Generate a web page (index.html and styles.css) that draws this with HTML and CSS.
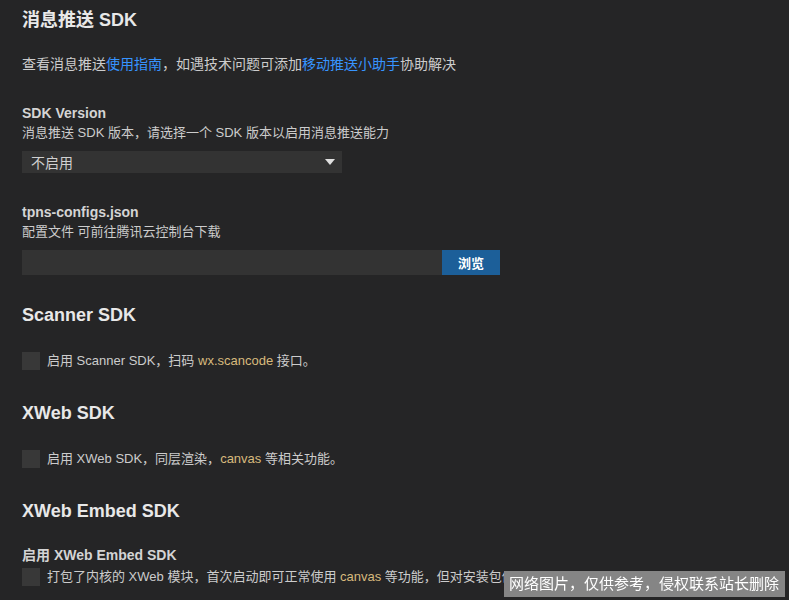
FILE: index.html
```html
<!DOCTYPE html>
<html lang="zh-CN">

<head>
    <meta charset="UTF-8">
    <meta name="viewport" content="width=device-width, initial-scale=1.0">
    <title>SDK 设置</title>
    <link rel="stylesheet" href="styles.css">
</head>

<body>
    <div class="page">
        <h1 class="title">消息推送 SDK</h1>
        <p class="intro">查看消息推送<a href="#">使用指南</a>，如遇技术问题可添加<a href="#">移动推送小助手</a>协助解决</p>

        <div class="field">
            <div class="field-label">SDK Version</div>
            <div class="field-desc">消息推送 SDK 版本，请选择一个 SDK 版本以启用消息推送能力</div>
            <div class="select">
                <span>不启用</span>
                <svg width="10" height="6" viewBox="0 0 10 6"><path d="M0 0h10L5 6z" fill="#e0e0e0"/></svg>
            </div>
        </div>

        <div class="field">
            <div class="field-label">tpns-configs.json</div>
            <div class="field-desc">配置文件 可前往腾讯云控制台下载</div>
            <div class="file-row">
                <div class="file-input"></div>
                <button class="button">浏览</button>
            </div>
        </div>

        <h2 class="title section after-field">Scanner SDK</h2>
        <label class="check-row">
            <span class="checkbox"></span>
            <span>启用 Scanner SDK，扫码 <code>wx.scancode</code> 接口。</span>
        </label>

        <h2 class="title section">XWeb SDK</h2>
        <label class="check-row">
            <span class="checkbox"></span>
            <span>启用 XWeb SDK，同层渲染，<code>canvas</code> 等相关功能。</span>
        </label>

        <h2 class="title section">XWeb Embed SDK</h2>
        <div class="field-label embed-label">启用 XWeb Embed SDK</div>
        <label class="check-row embed-row">
            <span class="checkbox"></span>
            <span class="clipped">打包了内核的 XWeb 模块，首次启动即可正常使用 <code>canvas</code> 等功能，但对安装包体积有一定影响。</span>
        </label>
    </div>

    <div class="watermark">网络图片，仅供参考，侵权联系站长删除</div>
</body>

</html>
```

FILE: styles.css
```css
body {
    font-family: "Liberation Sans", "Noto Sans CJK SC", sans-serif;
    margin: 0;
    padding: 0;
    background-color: #252526;
    color: #cccccc;
    height: 600px;
    overflow: hidden;
}

.page {
    padding: 8px 22px 0;
}

.title {
    font-size: 18px;
    line-height: 24px;
    font-weight: bold;
    color: #e8e8e8;
    margin: 0;
}

.section {
    margin-top: 30px;
}

.section.after-field {
    margin-top: 28px;
}

.intro {
    font-size: 14px;
    line-height: 20px;
    margin: 22px 0 0;
}

.intro a {
    color: #3794ff;
    text-decoration: none;
}

.field {
    margin-top: 29px;
}

.field-label {
    font-size: 14px;
    line-height: 20px;
    font-weight: bold;
    color: #d4d4d4;
}

.field-desc {
    font-size: 13px;
    line-height: 20px;
    margin-bottom: 8px;
}

.select {
    width: 320px;
    height: 22px;
    box-sizing: border-box;
    background-color: #333333;
    display: flex;
    align-items: center;
    justify-content: space-between;
    padding: 0 7px 0 9px;
    font-size: 14px;
    color: #d0d0d0;
}

.file-row {
    display: flex;
    height: 25px;
    width: 478px;
}

.file-input {
    flex: 1;
    background-color: #333333;
}

.button {
    width: 58px;
    background-color: #1c5f99;
    color: white;
    border: none;
    font-family: inherit;
    font-size: 13px;
    font-weight: bold;
    padding: 0;
    cursor: pointer;
}

.check-row {
    display: flex;
    align-items: center;
    gap: 7px;
    margin-top: 24px;
    font-size: 13px;
    line-height: 20px;
    white-space: nowrap;
}

.checkbox {
    width: 18px;
    height: 18px;
    flex-shrink: 0;
    background-color: #383838;
}

code {
    font-family: inherit;
    color: #d7ba7d;
}

.embed-label {
    margin-top: 22px;
}

.embed-row {
    margin-top: 2px;
}

/* the rest of this line sits under the watermark */
.clipped {
    width: 457px;
    overflow: hidden;
}

.watermark {
    position: fixed;
    right: 4px;
    bottom: 3px;
    width: 281px;
    height: 26px;
    box-sizing: border-box;
    background-color: rgba(150, 150, 150, 0.85);
    color: #ffffff;
    font-size: 15px;
    line-height: 26px;
    padding-left: 5px;
    white-space: nowrap;
}
```
